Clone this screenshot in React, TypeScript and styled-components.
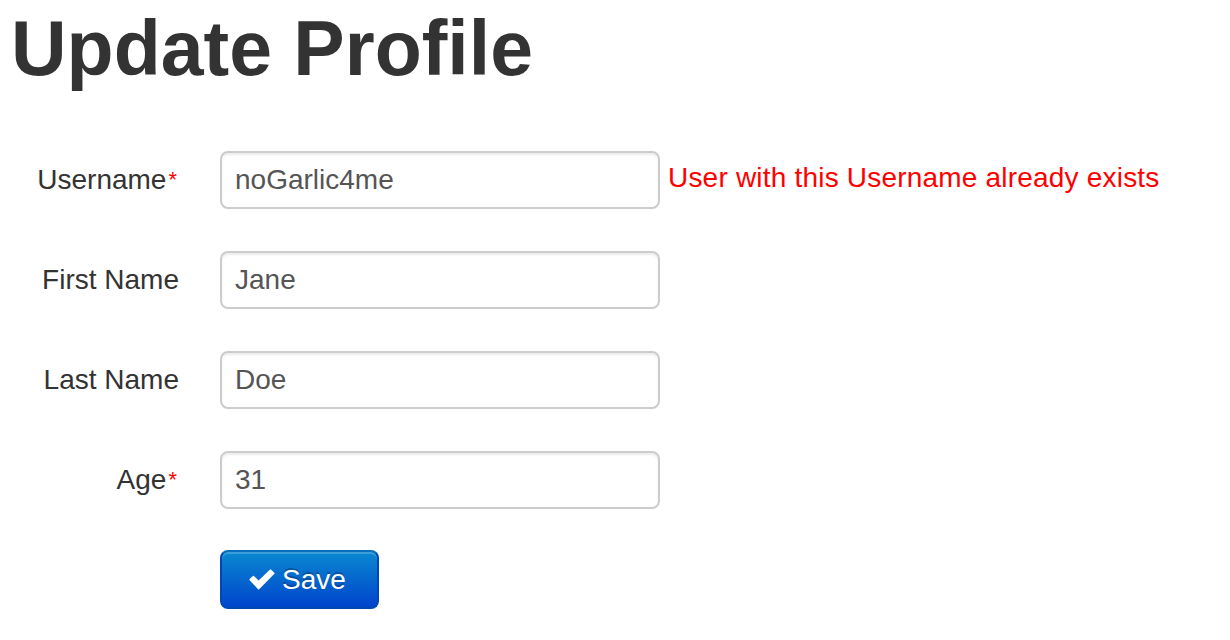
import React from "react";
import styled, { createGlobalStyle } from "styled-components";

const GlobalStyle = createGlobalStyle`
  html, body {
    margin: 0;
    padding: 0;
    background: #ffffff;
  }
  body {
    font-family: "Liberation Sans", Arial, Helvetica, sans-serif;
    color: #333333;
  }
`;

const Page = styled.div`
  display: flex;
  flex-direction: column;
  padding: 10px 0 0 0;
`;

const Title = styled.h1`
  margin: 0 0 65px 11px;
  font-size: 77px;
  line-height: 76px;
  font-weight: 700;
  color: #333333;
`;

const Form = styled.form`
  display: flex;
  flex-direction: column;
  gap: 42px;
`;

const Row = styled.div`
  display: flex;
  align-items: center;
`;

const Label = styled.label`
  width: 179px;
  margin-right: 41px;
  text-align: right;
  font-size: 28px;
  line-height: 40px;
  color: #333333;
`;

const Required = styled.span`
  color: #ff0000;
  font-size: 22px;
  margin-left: 2px;
  margin-right: 2px;
  vertical-align: 2px;
`;

const Input = styled.input`
  box-sizing: border-box;
  width: 440px;
  height: 58px;
  padding: 8px 13px;
  border: 2px solid #cccccc;
  border-radius: 8px;
  box-shadow: inset 0 2px 2px rgba(0, 0, 0, 0.075);
  font-family: "Liberation Sans", Arial, Helvetica, sans-serif;
  font-size: 28px;
  color: #555555;
  background: #ffffff;
  outline: none;
`;

const ErrorText = styled.span`
  margin-left: 8px;
  margin-top: -4px;
  font-size: 28px;
  letter-spacing: 0.2px;
  color: #ff0000;
`;

const ButtonRow = styled.div`
  display: flex;
  padding-left: 220px;
  margin-top: -1px;
`;

const SaveButton = styled.button`
  box-sizing: border-box;
  display: inline-flex;
  align-items: center;
  gap: 7px;
  width: 159px;
  height: 59px;
  padding: 0 0 0 27px;
  border: 2px solid #0047b3;
  border-top-color: #0a6ebd;
  border-radius: 8px;
  background: linear-gradient(to bottom, #0a88d0, #0044cc);
  box-shadow: inset 0 2px 0 rgba(255, 255, 255, 0.2), 0 2px 2px rgba(0, 0, 0, 0.05);
  color: #ffffff;
  font-family: "Liberation Sans", Arial, Helvetica, sans-serif;
  font-size: 28px;
  text-shadow: 0 -2px 0 rgba(0, 0, 0, 0.25);
  cursor: pointer;
`;

const CheckIcon = () => (
  <svg width="26" height="21" viewBox="0 0 26 21" aria-hidden="true">
    <path
      d="M1.2 10.6 L4.4 7.6 L9.6 12.6 L21.6 1.2 L24.8 4.3 L9.6 19.6 Z"
      fill="#ffffff"
      stroke="#ffffff"
      strokeWidth="1.6"
      strokeLinejoin="round"
    />
  </svg>
);

type Field = {
  label: string;
  value: string;
  required?: boolean;
  error?: string;
};

const fields: Field[] = [
  {
    label: "Username",
    value: "noGarlic4me",
    required: true,
    error: "User with this Username already exists",
  },
  { label: "First Name", value: "Jane" },
  { label: "Last Name", value: "Doe" },
  { label: "Age", value: "31", required: true },
];

export default function App() {
  return (
    <>
      <GlobalStyle />
      <Page>
        <Title>Update Profile</Title>
        <Form onSubmit={(e) => e.preventDefault()}>
          {fields.map((f) => (
            <Row key={f.label}>
              <Label>
                {f.label}
                {f.required && <Required>*</Required>}
              </Label>
              <Input type="text" defaultValue={f.value} />
              {f.error && <ErrorText>{f.error}</ErrorText>}
            </Row>
          ))}
          <ButtonRow>
            <SaveButton type="submit">
              <CheckIcon />
              Save
            </SaveButton>
          </ButtonRow>
        </Form>
      </Page>
    </>
  );
}
